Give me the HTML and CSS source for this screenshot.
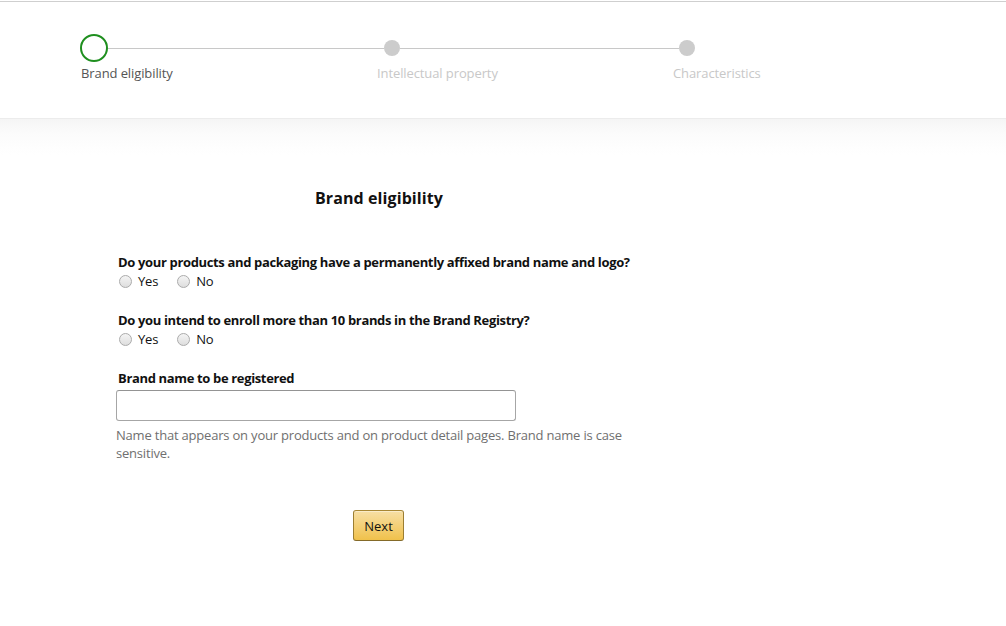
FILE: index.html
```html
<!DOCTYPE html>
<html lang="en">
<head>
<meta charset="utf-8">
<title>Brand eligibility</title>
<link rel="stylesheet" href="styles.css">
</head>
<body>
<header class="header">
  <div class="track">
    <span class="marker marker-active"></span>
    <span class="track-line line-1"></span>
    <span class="marker marker-dot"></span>
    <span class="track-line line-2"></span>
    <span class="marker marker-dot"></span>
  </div>
  <div class="labels">
    <span class="step-label active">Brand eligibility</span>
    <span class="step-label">Intellectual property</span>
    <span class="step-label">Characteristics</span>
  </div>
</header>
<main class="main">
  <form class="form">
    <h1 class="title">Brand eligibility</h1>
    <div class="question q1">
      <p class="q-text">Do your products and packaging have a permanently affixed brand name and logo?</p>
      <div class="radios">
        <label class="radio"><input type="radio" name="logo"><span class="dot"></span>Yes</label>
        <label class="radio"><input type="radio" name="logo"><span class="dot"></span>No</label>
      </div>
    </div>
    <div class="question q2">
      <p class="q-text">Do you intend to enroll more than 10 brands in the Brand Registry?</p>
      <div class="radios">
        <label class="radio"><input type="radio" name="ten"><span class="dot"></span>Yes</label>
        <label class="radio"><input type="radio" name="ten"><span class="dot"></span>No</label>
      </div>
    </div>
    <div class="field">
      <label class="q-text field-label" for="brand">Brand name to be registered</label>
      <input class="text-input" id="brand" type="text">
      <p class="help">Name that appears on your products and on product detail pages. Brand name is case sensitive.</p>
    </div>
    <div class="actions">
      <button type="button" class="btn-next">Next</button>
    </div>
  </form>
</main>
</body>
</html>
```

FILE: styles.css
```css
* { box-sizing: border-box; }
html, body { margin: 0; background: #fff; }
body {
  padding-top: 1px;
  font-family: "Open Sans", "Noto Sans", sans-serif;
  font-size: 13px;
  color: #111;
}
.header {
  border-top: 1px solid #cfcfcf;
  height: 117px;
  padding: 32px 0 0 80px;
  background: #fff;
}
.track {
  display: flex;
  align-items: center;
  height: 28px;
}
.marker { display: block; border-radius: 50%; flex: none; }
.marker-active {
  width: 28px;
  height: 28px;
  border: 2px solid #1f8f1f;
  background: #fff;
}
.marker-dot {
  width: 16px;
  height: 16px;
  background: #cccccc;
}
.track-line { display: block; height: 1px; background: #c8c8c8; flex: none; }
.line-1 { width: 276px; }
.line-2 { width: 279px; }
.labels {
  display: grid;
  grid-template-columns: 296px 296px 296px;
  margin-top: 2px;
  padding-left: 1px;
}
.step-label {
  font-size: 13px;
  line-height: 18px;
  color: #c8c8c8;
  letter-spacing: -0.1px;
}
.step-label.active { color: #555; }

.main {
  border-top: 1px solid #ececec;
  background: linear-gradient(#f5f5f5, #fbfbfb 14px, #fff 36px);
  padding: 68px 0 80px 116px;
  min-height: 507px;
}
.form { width: 526px; }
.title {
  margin: 0 0 44px;
  text-align: center;
  font-size: 16px;
  line-height: 22px;
  font-weight: 700;
  letter-spacing: 0.1px;
}
.question { padding-left: 2px; margin-bottom: 20px; }
.q-text {
  margin: 0;
  font-weight: 700;
  line-height: 18px;
  display: block;
  letter-spacing: -0.35px;
  white-space: nowrap;
}
.radios { display: flex; gap: 18px; line-height: 20px; }
.radio { display: inline-flex; align-items: center; color: #111; letter-spacing: -0.2px; }
.radio input { display: none; }
.dot {
  width: 13px;
  height: 13px;
  border-radius: 50%;
  border: 1px solid #ababab;
  background: linear-gradient(#f4f4f4, #dedede);
  margin: 0 6px 0 1px;
}
.field-label { padding-left: 2px; margin-bottom: 3px; }
.text-input {
  display: block;
  width: 400px;
  height: 31px;
  border: 1px solid #a6a6a6;
  border-top-color: #949494;
  border-radius: 3px;
  font: inherit;
  padding: 3px 7px;
}
.help {
  margin: 5px 0 0;
  color: #6f6f6f;
  line-height: 18px;
  letter-spacing: -0.2px;
}
.actions {
  margin-top: 48px;
  padding-left: 237px;
}
.btn-next {
  width: 51px;
  height: 31px;
  border: 1px solid #a88734;
  border-color: #a88734 #9c7e31 #846a29;
  border-radius: 3px;
  background: linear-gradient(#f7dfa5, #f0c14b);
  font: inherit;
  color: #111;
  padding: 0;
  box-shadow: inset 0 1px 0 rgba(255,255,255,.4);
}
```
